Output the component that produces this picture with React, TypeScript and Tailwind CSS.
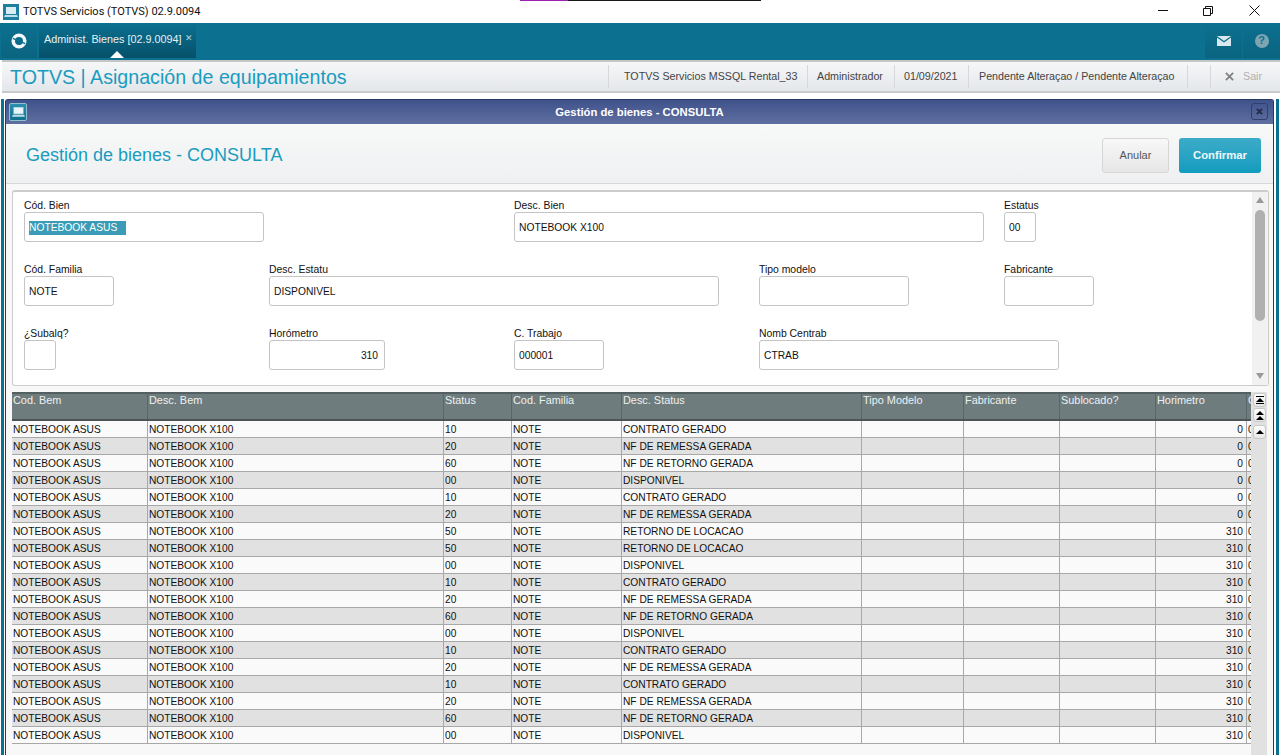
import React from "react";

const cols = [
  { n: "Cod. Bem", w: "w-[136px]" },
  { n: "Desc. Bem", w: "w-[296px]" },
  { n: "Status", w: "w-[68px]" },
  { n: "Cod. Familia", w: "w-[110px]" },
  { n: "Desc. Status", w: "w-[240px]" },
  { n: "Tipo Modelo", w: "w-[102px]" },
  { n: "Fabricante", w: "w-[96px]" },
  { n: "Sublocado?", w: "w-[96px]" },
  { n: "Horimetro", w: "w-[91px]" },
  { n: "C", w: "w-[4px]" },
];

const C = "CONTRATO GERADO";
const R = "NF DE REMESSA GERADA";
const T = "NF DE RETORNO GERADA";
const D = "DISPONIVEL";
const L = "RETORNO DE LOCACAO";
const rows: [string, string, string][] = [
  ["10", C, "0"], ["20", R, "0"], ["60", T, "0"], ["00", D, "0"], ["10", C, "0"], ["20", R, "0"],
  ["50", L, "310"], ["50", L, "310"], ["00", D, "310"], ["10", C, "310"], ["20", R, "310"], ["60", T, "310"],
  ["00", D, "310"], ["10", C, "310"], ["20", R, "310"], ["10", C, "310"], ["20", R, "310"], ["60", T, "310"], ["00", D, "310"],
];

function Monitor({ className }: { className: string }) {
  return (
    <span className={`flex items-center justify-center rounded-[2px] border border-[#8fc0d0] bg-gradient-to-b from-[#2a8fb0] to-[#0f6f8f] ${className}`}>
      <svg viewBox="0 0 14 12" className="h-[12px] w-[13px]">
        <rect x="2" y="1" width="10" height="7" fill="#e8f4f8" stroke="#bfe0ea" strokeWidth="0.6" />
        <path d="M1 9h12l1 2H0z" fill="#bfe0ea" />
      </svg>
    </span>
  );
}

function Field({ label, value, w, right, selected, className = "" }: { label: string; value?: string; w: string; right?: boolean; selected?: boolean; className?: string }) {
  return (
    <div className={className}>
      <div className="h-[13px] text-[10.4px] leading-[13px] text-[#111]">{label}</div>
      <div className={`flex h-[30px] items-center rounded-[3px] border border-[#c4c4c4] bg-white pt-[2px] text-[10.25px] text-[#111] ${right ? "justify-end pr-[6px]" : "pl-[4px]"} ${w}`}>
        {selected ? <span className="w-[97px] bg-[#3a9cb6] leading-[14px] text-white">{value}</span> : value}
      </div>
    </div>
  );
}

function Triangle({ up }: { up?: boolean }) {
  return (
    <svg viewBox="0 0 8 4" className="h-[4px] w-[8px]">
      <path d={up ? "M4 0l4 4H0z" : "M4 4L0 0h8z"} fill="#000" />
    </svg>
  );
}

export default function App() {
  return (
    <div className="flex h-[755px] w-[1280px] flex-col overflow-hidden bg-white text-[#111]" style={{ fontFamily: '"Liberation Sans", Arial, sans-serif' }}>
      {/* OS title bar */}
      <div className="flex h-[23px] shrink-0 flex-col">
        <div className="ml-[520px] flex h-px shrink-0">
          <div className="w-[48px] bg-[#9a1fb0]" />
          <div className="w-[193px] bg-[#1a1a1a]" />
        </div>
        <div className="flex flex-1 items-center pl-[3px]">
          <svg viewBox="0 0 16 16" className="mr-[4px] h-[16px] w-[16px]">
            <rect width="16" height="16" fill="#1f7f9f" />
            <rect x="3" y="3" width="10" height="7" fill="#d9edf3" />
            <path d="M2 11h12l1 2H1z" fill="#bfe0ea" />
          </svg>
          <span className="text-[11px] text-[#111]" style={{ fontFamily: 'Roboto, sans-serif' }}>TOTVS Servicios (TOTVS) 02.9.0094</span>
          <div className="mb-[3px] ml-auto flex items-center">
            <svg viewBox="0 0 10 1" className="mr-[35px] h-px w-[10px]"><rect width="10" height="1" fill="#111" /></svg>
            <svg viewBox="0 0 10 10" className="mr-[36px] h-[10px] w-[10px]">
              <path d="M.5 2.5h7v7h-7zM2.5 2.5v-2h7v7h-2" fill="none" stroke="#111" />
            </svg>
            <svg viewBox="0 0 11 11" className="mr-[20px] h-[11px] w-[11px]">
              <path d="M.5.5l10 10M10.5.5l-10 10" fill="none" stroke="#111" />
            </svg>
          </div>
        </div>
      </div>

      {/* App bar */}
      <div className="flex h-[37px] shrink-0 bg-[#0c7190] pb-[2px] pl-px">
        <div className="flex w-[36px] items-center justify-center bg-gradient-to-b from-[#0c7190] to-[#0a6480]">
          <svg viewBox="0 0 18 18" className="h-[16px] w-[16px]">
            <circle cx="9" cy="9" r="6.5" fill="none" stroke="#f4f8fa" strokeWidth="4" />
            <path d="M2 6l14 6" stroke="#0c7190" strokeWidth="1.6" />
          </svg>
        </div>
        <div className="relative ml-[2px] flex w-[157px] whitespace-nowrap bg-gradient-to-b from-[#0c7190] to-[#06506a] pl-[5px] pt-[10px] text-[10.8px] leading-[13px] text-[#e6f1f5]">
          <span>Administ. Bienes [02.9.0094]</span>
          <span className="ml-[4px] text-[9px] leading-[11px] text-[#b8d4dd]">✕</span>
          <div className="absolute bottom-0 left-[71px] h-0 w-0 border-x-[7px] border-b-[7px] border-x-transparent border-b-white" />
        </div>
        <div className="ml-auto flex">
          <div className="flex w-[37px] items-center justify-center bg-gradient-to-b from-[#0c7190] to-[#0a6480]">
            <svg viewBox="0 0 14 10" className="h-[10px] w-[14px]">
              <path d="M0 0h14L7 5z" fill="#d8e8ee" />
              <path d="M0 1.5l7 5 7-5V10H0z" fill="#d8e8ee" />
            </svg>
          </div>
          <div className="ml-px flex w-[37px] items-center justify-center bg-gradient-to-b from-[#0c7190] to-[#0a6480]">
            <span className="flex h-[14px] w-[14px] items-center justify-center rounded-full bg-[#7fa5b3] text-[11px] font-bold text-[#0c7190]">?</span>
          </div>
        </div>
      </div>

      {/* Page header */}
      <div className="ml-[2px] flex h-[33px] shrink-0 items-center border-y-2 border-y-[#c4c6c8] border-b-[#c8cacc] bg-gradient-to-b from-[#f6f7f8] to-[#e4e7ea] pl-[8px]">
        <span className="text-[19.65px] leading-[24px] text-[#1a9cc0]">TOTVS | Asignación de equipamientos</span>
        <div className="ml-auto flex h-full items-center text-[10.7px] text-[#444]">
          <div className="flex h-[23px] w-[199px] items-center border-l border-[#d6d8da] pl-[15px]">TOTVS Servicios MSSQL Rental_33</div>
          <div className="flex h-[23px] w-[87px] items-center border-l border-[#d6d8da] pl-[9px]">Administrador</div>
          <div className="flex h-[23px] w-[74px] items-center border-l border-[#d6d8da] pl-[9px]">01/09/2021</div>
          <div className="flex h-[23px] w-[219px] items-center border-l border-[#d6d8da] pl-[10px]">Pendente Alteraçao / Pendente Alteraçao</div>
          <div className="flex h-[23px] w-[23px] border-l border-[#d6d8da]" />
          <div className="flex h-[23px] w-[70px] items-center border-l border-[#d6d8da] pl-[14px] text-[#b0b0b0]">
            <svg viewBox="0 0 10 10" className="mr-[9px] h-[9px] w-[9px]">
              <path d="M1 1l8 8M9 1l-8 8" stroke="#808080" strokeWidth="2" />
            </svg>
            Sair
          </div>
        </div>
      </div>

      {/* Frame around window */}
      <div className="mt-[6px] flex min-h-0 flex-1 pl-px pr-px">
        <div className="w-[3px] bg-[#0c7190]" />
        <div className="w-px bg-white" />
        {/* Window */}
        <div className="flex min-w-0 w-[1269px] flex-col rounded-t-[3px] border-x border-t border-[#27395f] bg-[#f8f8f8]">
          <div className="relative flex h-[24px] shrink-0 items-center justify-center bg-gradient-to-b from-[#3f528b] to-[#606fa0] text-[11.3px] font-bold text-white">
            <Monitor className="absolute left-[3px] top-[3px] h-[18px] w-[18px]" />
            Gestión de bienes - CONSULTA
            <span className="absolute right-[5px] top-[3px] flex h-[17px] w-[17px] items-center justify-center rounded-[3px] border border-[#2f4070]">
              <svg viewBox="0 0 8 8" className="h-[7px] w-[7px]">
                <path d="M1 1l6 6M7 1l-6 6" stroke="#222b44" strokeWidth="2" />
              </svg>
            </span>
          </div>

          <div className="flex h-[60px] shrink-0 items-center border-b border-[#d8d8d8] bg-gradient-to-b from-[#f7f8f8] to-[#eff0f1] pl-[20px] pr-[12px] pt-[4px]">
            <span className="text-[18px] text-[#1a9cc0]">Gestión de bienes - CONSULTA</span>
            <div className="ml-auto flex">
              <div className="flex h-[35px] w-[67px] items-center justify-center rounded-[3px] border border-[#d6d6d6] bg-gradient-to-b from-[#f8f8f8] to-[#e6e6e6] text-[11px] text-[#555]">Anular</div>
              <div className="ml-[10px] flex h-[35px] w-[82px] items-center justify-center rounded-[3px] bg-gradient-to-b from-[#3babc9] to-[#0f9cbe] text-[11.3px] font-bold text-[#eef8fb]">Confirmar</div>
            </div>
          </div>

          {/* Form */}
          <div className="ml-[6px] mt-[6px] flex h-[196px] w-[1257px] shrink-0 rounded-[3px] border border-t-2 border-[#cccccc] bg-white">
            <div className="grid flex-1 grid-cols-[245px_245px_245px_245px_1fr] grid-rows-[64px_64px_64px] pl-[11px] pt-[7px]">
              <Field label="Cód. Bien" value="NOTEBOOK ASUS" w="w-[240px]" selected />
              <Field label="Desc. Bien" value="NOTEBOOK X100" w="w-[470px]" className="col-start-3 col-span-2" />
              <Field label="Estatus" value="00" w="w-[32px]" className="col-start-5" />
              <Field label="Cód. Familia" value="NOTE" w="w-[90px]" className="col-start-1" />
              <Field label="Desc. Estatu" value="DISPONIVEL" w="w-[450px]" className="col-span-2" />
              <Field label="Tipo modelo" w="w-[150px]" />
              <Field label="Fabricante" w="w-[90px]" />
              <Field label="¿Subalq?" w="w-[32px]" />
              <Field label="Horómetro" value="310" w="w-[116px]" right />
              <Field label="C. Trabajo" value="000001" w="w-[90px]" />
              <Field label="Nomb Centrab" value="CTRAB" w="w-[300px]" className="col-span-2" />
            </div>
            <div className="flex w-[16px] shrink-0 flex-col items-center justify-between bg-[#f1f1f1] pb-[6px] pt-[5px]">
              <div className="flex flex-col items-center">
                <svg viewBox="0 0 8 6" className="h-[6px] w-[8px]"><path d="M4 0l4 6H0z" fill="#999" /></svg>
                <div className="mt-[7px] h-[111px] w-[10px] rounded-[5px] bg-[#b0b0b0]" />
              </div>
              <svg viewBox="0 0 8 6" className="h-[6px] w-[8px]"><path d="M4 6L0 0h8z" fill="#999" /></svg>
            </div>
          </div>

          {/* Table */}
          <div className="ml-[6px] mt-[6px] flex min-h-0 flex-1">
            <div className="w-[1239px] overflow-hidden">
              <div className="flex h-[29px] border-y-2 border-b-[#4a5456] border-t-[#545f61] bg-[#6e7c7e]">
                {cols.map((c, j) => (
                  <div key={c.n} className={`${c.w} shrink-0 overflow-hidden whitespace-nowrap pl-px text-[10.9px] leading-[13px] text-[#eef0f0] ${j < 9 ? "border-r border-[#59656a]" : ""}`}>{c.n}</div>
                ))}
              </div>
              {rows.map((r, i) => (
                <div key={i} className={`flex h-[17px] border-b border-[#a8a8a8] text-[10.2px] leading-[16px] text-[#111] ${i % 2 ? "bg-[#e1e1e1]" : "bg-[#fafafa]"}`}>
                  {[
                    "NOTEBOOK ASUS", "NOTEBOOK X100", r[0], "NOTE", r[1], "", "", "", r[2], "0",
                  ].map((v, j) => (
                    <div key={j} className={`${cols[j].w} shrink-0 overflow-hidden whitespace-nowrap pl-px pt-px ${j < 9 ? "border-r border-[#a8a8a8]" : ""} ${j === 8 ? "pr-[3px] text-right" : ""}`}>{v}</div>
                  ))}
                </div>
              ))}
            </div>
            <div className="flex w-[16px] shrink-0 flex-col items-start bg-[#e1e1e1] pl-[2px] pt-px">
              <div className="flex h-[14px] w-[13px] flex-col items-center justify-center gap-[1px] rounded-[3px] border border-[#c8c8c8] bg-gradient-to-b from-[#fdfdfd] to-[#e8e8e8]">
                <div className="h-px w-[8px] bg-black" />
                <Triangle up />
                <div className="h-px w-[8px] bg-black" />
              </div>
              <div className="mt-px flex h-[14px] w-[13px] flex-col items-center justify-center gap-px rounded-[3px] border border-[#c8c8c8] bg-gradient-to-b from-[#fdfdfd] to-[#e8e8e8]">
                <Triangle up />
                <Triangle up />
              </div>
              <div className="mt-[3px] flex h-[14px] w-[13px] flex-col items-center justify-center rounded-[3px] border border-[#c8c8c8] bg-gradient-to-b from-[#fdfdfd] to-[#e8e8e8]">
                <Triangle up />
              </div>
            </div>
          </div>
        </div>
        <div className="w-[2px] bg-white" />
        <div className="w-[3px] bg-[#0c7190]" />
      </div>
    </div>
  );
}
